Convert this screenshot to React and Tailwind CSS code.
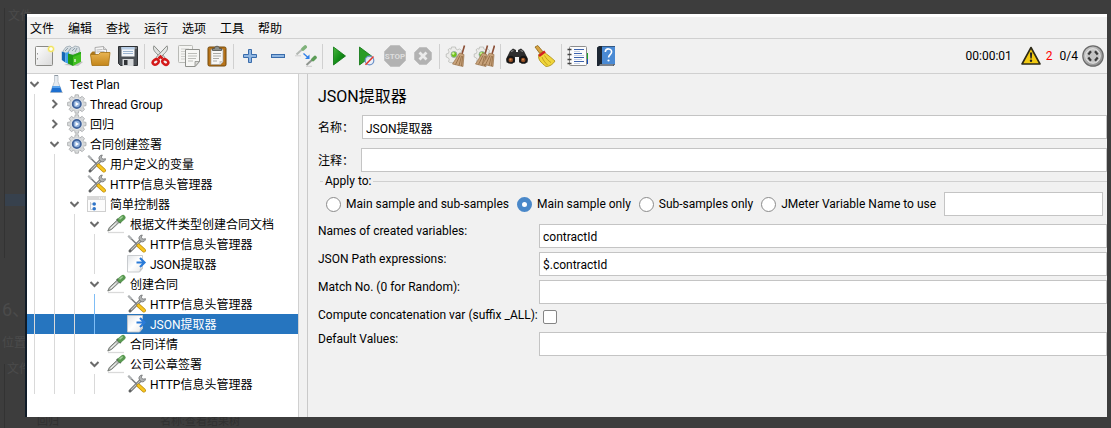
import React, { useState } from "react";

const MENUS = ["文件", "编辑", "查找", "运行", "选项", "工具", "帮助"];

/* ---------- toolbar icons (22 x 22) ---------- */

function Svg({ size = 22, children }) {
  return (
    <svg width={size} height={size} viewBox={`0 0 ${size} ${size}`} fill="none" aria-hidden="true" className="shrink-0">
      {children}
    </svg>
  );
}

const NewIcon = () => (
  <Svg>
    <defs>
      <linearGradient id="newPaper" x1="0" y1="0" x2="1" y2="1">
        <stop offset="0" stopColor="#fff" />
        <stop offset="1" stopColor="#d9d9d9" />
      </linearGradient>
    </defs>
    <rect x="2.5" y="1.5" width="17" height="19" rx="1" fill="url(#newPaper)" stroke="#8a8a86" />
    <path d="M4.5 8v1.5M4.5 13v1.5" stroke="#999" />
    <circle cx="18" cy="4" r="3.6" fill="#f7ee8e" opacity=".8" />
    <circle cx="18" cy="4" r="2.4" fill="#fffef0" stroke="#f0e040" />
  </Svg>
);

const TemplatesIcon = () => (
  <Svg>
    <path d="M3 20l14 1 5-4-6-2z" fill="#000" opacity=".2" />
    <path d="M2 6l3-4 4-1 2 2 3-2 4 1 1 4-3 3-12 1z" fill="#d5dde2" stroke="#9aa7b0" strokeWidth=".8" />
    <path d="M4 6l3-3M7 7l3-4M11 6l3-3M14 7l2-4" stroke="#8597a3" strokeWidth=".9" />
    <path d="M.8 6.500l3.500 1.200v9.800L.8 15z" fill="#1467b4" />
    <path d="M4.300 7.700L8 7v12l-3.700-1.500z" fill="#3ea0ea" />
    <path d="M7 8.500l5 1.500v11l-5-2.600z" fill="#1f9a16" />
    <path d="M12 10l8-3.200v10L12 21z" fill="#41c020" />
    <path d="M12 10l8-3.200v2L12 12z" fill="#2aa51a" />
    <path d="M14 14v3" stroke="#e8f8e0" strokeWidth="1.300" />
  </Svg>
);

const OpenIcon = () => (
  <Svg>
    <defs>
      <linearGradient id="folder" x1="0" y1="0" x2="0" y2="1">
        <stop offset="0" stopColor="#e8b452" />
        <stop offset="1" stopColor="#c4861a" />
      </linearGradient>
    </defs>
    <path d="M1.500 8.500l2-2h14l1.500 2v11H3z" fill="#a9761b" />
    <path d="M6 2.500l8.500-1 3 3v6h-11z" fill="#f6f6f6" stroke="#a5a5a5" strokeWidth=".9" />
    <path d="M7.500 5l6-.5M7.500 7l8-.5" stroke="#b5b5b5" strokeWidth=".9" />
    <path d="M14.500 1.500v3h3" fill="#ddd" stroke="#a5a5a5" strokeWidth=".8" />
    <path d="M1.500 9.500h8l2-2h9.500l-1.500 13H3z" fill="url(#folder)" stroke="#a5700f" strokeWidth=".8" />
  </Svg>
);

const SaveIcon = () => (
  <Svg>
    <path d="M1.500 1.500h19v19H3.500l-2-2z" fill="#4c5156" stroke="#2d3033" />
    <rect x="4.500" y="2" width="13" height="9.500" fill="#f4f7fa" />
    <rect x="4.500" y="2" width="13" height="2.500" fill="#b9cfe8" />
    <path d="M6 6.500h10M6 8.500h10" stroke="#9bb4cf" />
    <rect x="5.500" y="14" width="11" height="7" fill="#d5d8da" />
    <rect x="7" y="15" width="3.500" height="5" fill="#303336" />
    <path d="M18.500 2.500h1v1h-1z" fill="#fff" />
  </Svg>
);

const CutIcon = () => (
  <Svg>
    <path d="M4 .8C2.600 3.500 4 6 6.500 8.500l6.500 6 1.800-2.200z" fill="#dfe1df" stroke="#7d807c" strokeWidth=".9" />
    <path d="M17 .8c1.400 2.700 0 5.200-2.500 7.700L8 14.500l-1.800-2.200z" fill="#e6e8e6" stroke="#7d807c" strokeWidth=".9" />
    <path d="M8.500 13.500l2-2 2 2" stroke="#d41a1a" strokeWidth="2.500" />
    <ellipse cx="5.700" cy="17" rx="3.200" ry="2.400" transform="rotate(-35 5.700 17)" stroke="#d41a1a" strokeWidth="2.500" />
    <ellipse cx="15.300" cy="17" rx="3.200" ry="2.400" transform="rotate(35 15.300 17)" stroke="#d41a1a" strokeWidth="2.500" />
  </Svg>
);

const CopyIcon = () => (
  <Svg>
    <rect x=".5" y=".5" width="14" height="17" rx=".8" fill="#f4f4f2" stroke="#b9bab6" />
    <path d="M3 4h8M3 6.500h8M3 9h5M3 11.500h4M3 14h4" stroke="#cfcfcc" />
    <path d="M7.500 4.500h14v12l-4.500 5H7.500z" fill="#f7f7f5" stroke="#8f908c" />
    <path d="M10 8.500h9M10 11h9M10 13.500h8M10 16h5" stroke="#bcbdb9" />
    <path d="M21.500 16.500H17v5z" fill="#d8d8d5" stroke="#8f908c" strokeWidth=".8" />
  </Svg>
);

const PasteIcon = () => (
  <Svg>
    <rect x="2" y="2" width="18" height="19" rx="1.500" fill="#b8741a" stroke="#73480b" />
    <path d="M5 4.500h12v12.500l-2.500 2.500H5z" fill="#f7f7f6" stroke="#a1a19d" strokeWidth=".7" />
    <path d="M7 8.500h8M7 11h8M7 13.500h6M7 16h4" stroke="#a9aaa6" />
    <path d="M17 16h-3.500v3.500z" fill="#c9c9c6" />
    <path d="M6.500 5.500V3.500h2c0-3 5-3 5 0h2v2z" fill="#8b8e89" stroke="#4d4f4c" strokeWidth=".8" />
  </Svg>
);

const PlusIcon = () => (
  <Svg>
    <path d="M9.500 4.500h3v5h5v3h-5v5h-3v-5h-5v-3h5z" fill="#8fb6e2" stroke="#3a6cab" />
  </Svg>
);

const MinusIcon = () => (
  <Svg>
    <rect x="4.500" y="9.500" width="13" height="3" fill="#8fb6e2" stroke="#3a6cab" />
  </Svg>
);

const ToggleIcon = () => (
  <Svg>
    <path d="M1.500 9.500l6-5.500" stroke="#b3b8b3" strokeWidth="2" />
    <path d="M8 4l2.200-2" stroke="#7fb27a" strokeWidth="3.600" strokeLinecap="round" />
    <path d="M8.500 8.500l4.500 4" stroke="#2f7fe8" strokeWidth="1.400" />
    <path d="M14.500 9.500v4.500H10z" fill="#2f7fe8" />
    <path d="M11.500 20l6-5.500" stroke="#8f958f" strokeWidth="2" />
    <path d="M18 14.500l2-2" stroke="#5c9d57" strokeWidth="3.600" strokeLinecap="round" />
    <path d="M0 10.800h6M11 21.300h6" stroke="#cfcfcf" />
  </Svg>
);

const PlayIcon = () => (
  <Svg>
    <defs>
      <linearGradient id="play" x1="0" y1="0" x2="1" y2="1">
        <stop offset="0" stopColor="#4ab83e" />
        <stop offset=".5" stopColor="#16901a" />
        <stop offset="1" stopColor="#06660a" />
      </linearGradient>
    </defs>
    <path d="M5.500 2l12 9-12 9z" fill="url(#play)" stroke="#0b7410" strokeWidth=".8" />
  </Svg>
);

const PlayNoPauseIcon = () => (
  <Svg>
    <path d="M3.500 2l12 9-12 9z" fill="#2a9c26" stroke="#0b7410" strokeWidth=".8" />
    <circle cx="13.500" cy="15.500" r="4.300" fill="#e9eef8" fillOpacity=".9" stroke="#6f93c8" strokeWidth="1.200" />
    <path d="M9.500 19.800l8-8.300" stroke="#e03a2c" strokeWidth="1.500" />
  </Svg>
);

const StopIcon = () => (
  <Svg>
    <path d="M6.500.5h9l6 6v9l-6 6h-9l-6-6v-9z" fill="#b2b2b2" stroke="#c2c2c2" />
    <text x="11" y="14" textAnchor="middle" fontSize="8" fontWeight="700" fill="#dedede" fontFamily="Roboto, sans-serif">
      STOP
    </text>
  </Svg>
);

const ShutdownIcon = () => (
  <Svg>
    <path d="M7.500 2.500h7l5 5v7l-5 5h-7l-5-5v-7z" fill="#b2b2b2" stroke="#c2c2c2" />
    <path d="M7.500 7.500l7 7M14.500 7.500l-7 7" stroke="#ebebeb" strokeWidth="2.800" />
  </Svg>
);

function Broom({ x = 0 }) {
  return (
    <g transform={`translate(${x} 0)`}>
      <path d="M18.500.5L16 9" stroke="#8b4e35" strokeWidth="1.600" />
      <path d="M13.500 8l4.500 1.500-1 12-10.500-2.500z" fill="#c8a27a" stroke="#98734c" strokeWidth=".7" />
      <path d="M14 10.500l-4.500 9M15.500 11L13 20.500M16.700 11l-1.200 10" stroke="#8a633a" strokeWidth=".7" />
    </g>
  );
}

const GearSmall = () => (
  <g>
    <path
      d="M6.500 2h4l.4 2 1.800.8 2-1 2 2-1 2 .5 2 1.800.7v3l-2 .6-.6 1.700.8 1.800H5l-1.500-1 .7-2L3.500 13 1.200 12V9l2.200-.6.6-1.600-1-2 1.600-1.300 1.500.7z"
      fill="#ececea"
      stroke="#b3b5b0"
      strokeWidth=".7"
    />
    <circle cx="9" cy="9.500" r="3" fill="#6fc41a" stroke="#9aa" strokeWidth=".9" />
    <circle cx="8.300" cy="8.500" r="1.200" fill="#d4f7a0" />
  </g>
);

const ClearIcon = () => (
  <Svg>
    <GearSmall />
    <Broom x={1} />
  </Svg>
);

const ClearAllIcon = () => (
  <Svg>
    <GearSmall />
    <Broom x={-4} />
    <Broom x={3} />
  </Svg>
);

const SearchIcon = () => (
  <Svg>
    <path d="M4 6l3-2.500 3 1.500v2h2V5l3-1.500L18 6l3.500 7v4.500H13V12H9v5.500H.5V13z" fill="#2e2e2e" />
    <path d="M5 6.500l2.500-1M14.500 5.500l2.500 1" stroke="#8c8c8c" strokeWidth="1.200" />
    <ellipse cx="4.600" cy="14.800" rx="4.300" ry="4" fill="#151515" />
    <ellipse cx="17.400" cy="14.800" rx="4.300" ry="4" fill="#151515" />
    <circle cx="4.800" cy="15" r="2.300" fill="#8e4a23" />
    <circle cx="17.200" cy="15" r="2.300" fill="#8e4a23" />
    <circle cx="4.500" cy="14.500" r="1" fill="#d69054" />
    <circle cx="17" cy="14.500" r="1" fill="#d69054" />
  </Svg>
);

const BroomIcon = () => (
  <Svg>
    <path d="M1 2L3.800.5l5 6-3 2z" fill="#d9a441" stroke="#8c6414" strokeWidth=".8" />
    <path d="M9.500 6.500l3 2.500c3 2 5.500 4.500 8.500 7-2 3.500-5.500 5.500-9 5.500-2-1.300-5-4-6.500-6.300C4 12 4.500 10 5 9z" fill="#f0d53a" stroke="#a98b12" strokeWidth=".8" />
    <path d="M5 11l6-4.500" stroke="#d32121" strokeWidth="2.400" />
    <path d="M8 12c1 3 3 5.500 5.500 8M10.500 10.500c1.500 3 4 5.500 6.500 7" stroke="#bd9a17" strokeWidth=".9" />
  </Svg>
);

const FunctionIcon = () => (
  <Svg>
    <path d="M18 8h3v6h-3z" fill="#19a326" />
    <path d="M18 14h3v5h-3z" fill="#164fb8" />
    <rect x="2.500" y="1.500" width="17" height="19" rx="1" fill="#fcfcfc" stroke="#8d8d8d" />
    <path d="M7 4.500h10M7 8.500h8M7 12.500h10M7 16.500h10" stroke="#3c62ad" strokeWidth="1.200" />
    <path d="M7 6.500h6M7 10.500h10M7 14.500h8M7 18.500h6" stroke="#b8c4dc" strokeWidth=".8" />
    <path d="M.5 4.500h4M.5 9.500h4M.5 14.500h4M.5 18.500h4" stroke="#444" strokeWidth="1.600" />
  </Svg>
);

const HelpIcon = () => (
  <Svg>
    <path d="M2 2.500L4 1h16v18l-1.500 2H2z" fill="#1d2733" />
    <path d="M7 1.500h13v17.500H7z" fill="#4a8ad4" />
    <path d="M5 19.500h14l-1 1H4z" fill="#d9dee4" />
    <path d="M10.300 7c.2-4.200 6.500-4 6.300 0-.1 2.500-3 2.800-3 5.500" stroke="#fff" strokeWidth="1.600" />
    <circle cx="13.500" cy="15.500" r="1.100" fill="#fff" />
  </Svg>
);

const WarningIcon = () => (
  <Svg>
    <path d="M11 2.500l9 16.500H2z" fill="#f2ca12" stroke="#2d2a18" strokeWidth="1.600" strokeLinejoin="round" />
    <path d="M9.900 7.500h2.300l-.5 6h-1.300z" fill="#222" />
    <circle cx="11" cy="15.700" r="1.200" fill="#222" />
  </Svg>
);

const StatusIcon = () => (
  <Svg>
    <defs>
      <linearGradient id="ring" x1="0" y1="0" x2="1" y2="1">
        <stop offset="0" stopColor="#d2d2d2" />
        <stop offset="1" stopColor="#858585" />
      </linearGradient>
    </defs>
    <circle cx="11" cy="11" r="10.200" fill="url(#ring)" stroke="#6a6a6a" strokeWidth="1.200" />
    <circle cx="11" cy="11" r="7.300" fill="#c4c4c4" stroke="#efefef" strokeWidth=".8" />
    <path d="M6.300 9.500l2.700-3.200M13 6.300l2.700 3.200M6.300 12.500l2.700 3.200M15.700 12.500L13 15.700" stroke="#3a3a3a" strokeWidth="2.200" />
  </Svg>
);

const TOOLBAR = [
  [["New", NewIcon], ["Templates", TemplatesIcon], ["Open", OpenIcon], ["Save", SaveIcon]],
  [["Cut", CutIcon], ["Copy", CopyIcon], ["Paste", PasteIcon]],
  [["Expand all", PlusIcon], ["Collapse all", MinusIcon], ["Toggle", ToggleIcon]],
  [["Start", PlayIcon], ["Start no pauses", PlayNoPauseIcon], ["Stop", StopIcon, true], ["Shutdown", ShutdownIcon, true]],
  [["Clear", ClearIcon], ["Clear all", ClearAllIcon]],
  [["Search", SearchIcon], ["Reset search", BroomIcon]],
  [["Function helper", FunctionIcon], ["Help", HelpIcon]],
];

/* ---------- tree icons (20 x 20) ---------- */

const FlaskIcon = () => (
  <Svg size={20}>
    <path d="M3 18.500h13" stroke="#d0d0d0" />
    <path d="M7.500 1.500h3.500v6l4 10.500H3.500l4-10.500z" fill="#e6ebf0" stroke="#b6bfc8" strokeWidth=".8" />
    <path d="M5.800 12h7l2.200 6.200H3.700z" fill="#1d6fd0" />
    <path d="M5.800 12h7l.7 2H5.100z" fill="#5ba4ec" />
    <path d="M7.500 1.500H11" stroke="#8e98a2" />
  </Svg>
);

const GEAR_ANGLES = [0, 45, 90, 135, 180, 225, 270, 315];

const GearIcon = () => (
  <Svg size={20}>
    {GEAR_ANGLES.map((a) => (
      <path key={a} d="M8.200.8h3.200l.8 4H7.400z" transform={`rotate(${a} 9.800 10)`} fill="#d9dbdc" stroke="#a6a8aa" strokeWidth=".8" />
    ))}
    <circle cx="9.800" cy="10" r="7" fill="#d3d5d6" />
    <circle cx="9.800" cy="10" r="5.700" fill="#eceded" />
    <circle cx="9.800" cy="10" r="4.100" fill="#8fb0dc" stroke="#3f629b" strokeWidth="1.800" />
    <path d="M8.500 7.800l3.500 2.200-3.500 2.200z" fill="#fff" />
  </Svg>
);

const ToolsIcon = () => (
  <Svg size={20}>
    <path d="M3 17l11-11" stroke="#5f6162" strokeWidth="3" strokeLinecap="round" />
    <path d="M4 16l9.500-9.500" stroke="#c3c5c5" strokeWidth="1.200" />
    <path d="M12 5c-.5-2 1-4 3.300-4l-1 2.200 1.500 2 2.700-.5c0 2.300-2.200 3.800-4.500 3z" fill="#b0b2b3" stroke="#707273" strokeWidth=".8" />
    <path d="M1.500 2l8.500 8.500" stroke="#7b7e80" strokeWidth="1.600" />
    <path d="M1.200 1.700l3.300 3.300" stroke="#b0b3b5" strokeWidth="2.200" />
    <path d="M11.500 11.500l5.500 5" stroke="#b98a0c" strokeWidth="4" strokeLinecap="round" />
    <path d="M11.500 11.500l5.500 5" stroke="#f7c520" strokeWidth="2.600" strokeLinecap="round" />
  </Svg>
);

const ControllerIcon = () => (
  <Svg size={20}>
    <rect x=".5" y="2.500" width="18" height="15" fill="#fcfcfc" stroke="#cfcfcf" />
    <rect x="0" y="2" width="19" height="4" fill="#d8d8d8" />
    <path d="M12 4h1M14 4h1M16 4h1" stroke="#fff" />
    <path d="M3.500 8v7.500h3M3.500 10h3" stroke="#b5bdc6" strokeWidth=".8" />
    <circle cx="7.200" cy="10" r="1.800" fill="#2f74c8" />
    <circle cx="7.200" cy="14.700" r="1.800" fill="#2f74c8" />
  </Svg>
);

const DropperIcon = () => (
  <Svg size={20}>
    <path d="M1 18.500h16" stroke="#dadada" strokeWidth="1.300" />
    <path d="M.8 17l1.500-3.500 8-7.500L12.500 8l-8 7.500z" fill="#b4b8b4" stroke="#6f756f" strokeWidth=".9" />
    <path d="M3.500 14.500l6-5.500" stroke="#fff" strokeWidth="1" />
    <path d="M9.800 5l4 4" stroke="#4b574b" strokeWidth="1.800" />
    <path d="M13 6l3-2.500" stroke="#5a9a52" strokeWidth="5" strokeLinecap="round" />
    <path d="M13 4.800l2.200-1.800" stroke="#a3d09c" strokeWidth="1.500" strokeLinecap="round" />
  </Svg>
);

const ExtractorIcon = () => (
  <Svg size={20}>
    <defs>
      <linearGradient id="extract" x1="0" y1="0" x2="1" y2="1">
        <stop offset="0" stopColor="#dfe3e7" />
        <stop offset=".5" stopColor="#fff" />
        <stop offset="1" stopColor="#e8e8e8" />
      </linearGradient>
    </defs>
    <path d="M.5 1.500h15v13l-3 3.500H.5z" fill="url(#extract)" stroke="#c3c6c9" strokeWidth=".9" />
    <path d="M12.500 18l.5-3.500 3-.5z" fill="#c4c6c8" />
    <path d="M9.500 8.500H17M13 4l4.500 4.500L13 13" stroke="#2a7bd8" strokeWidth="2.200" />
  </Svg>
);

const TREE = [
  { level: 0, icon: FlaskIcon, label: "Test Plan", state: "open" },
  { level: 1, icon: GearIcon, label: "Thread Group", state: "closed" },
  { level: 1, icon: GearIcon, label: "回归", state: "closed" },
  { level: 1, icon: GearIcon, label: "合同创建签署", state: "open" },
  { level: 2, icon: ToolsIcon, label: "用户定义的变量" },
  { level: 2, icon: ToolsIcon, label: "HTTP信息头管理器" },
  { level: 2, icon: ControllerIcon, label: "简单控制器", state: "open" },
  { level: 3, icon: DropperIcon, label: "根据文件类型创建合同文档", state: "open" },
  { level: 4, icon: ToolsIcon, label: "HTTP信息头管理器" },
  { level: 4, icon: ExtractorIcon, label: "JSON提取器" },
  { level: 3, icon: DropperIcon, label: "创建合同", state: "open" },
  { level: 4, icon: ToolsIcon, label: "HTTP信息头管理器", active: true },
  { level: 4, icon: ExtractorIcon, label: "JSON提取器", active: true, selected: true },
  { level: 3, icon: DropperIcon, label: "合同详情" },
  { level: 3, icon: DropperIcon, label: "公司公章签署", state: "open" },
  { level: 4, icon: ToolsIcon, label: "HTTP信息头管理器" },
];

function Expander({ state, label }) {
  if (!state) return <span className="w-5 shrink-0" />;
  return (
    <button type="button" aria-label={`${state === "open" ? "Collapse" : "Expand"} ${label}`} className="flex h-5 w-5 shrink-0 items-center pl-[3px]">
      <svg width="10" height="10" viewBox="0 0 10 10" fill="none" stroke="#6b6b6b" strokeWidth="2" aria-hidden="true">
        <path d={state === "open" ? "M.5 3l4 4 4-4" : "M2.500 1l4 4-4 4"} />
      </svg>
    </button>
  );
}

function TreeRow({ node }) {
  const Icon = node.icon;
  return (
    <li
      role="treeitem"
      aria-level={node.level + 1}
      aria-selected={!!node.selected}
      className={`flex h-5 items-center ${node.selected ? "bg-[#2675bf] text-white" : ""}`}
    >
      {Array.from({ length: node.level }, (_, i) => (
        <span key={i} className="flex h-5 w-5 shrink-0 pl-[7px]">
          <span className={`w-px ${node.active && i === 3 ? "bg-[#7fbdf5]" : "bg-[#d9d9d9]"}`} />
        </span>
      ))}
      <Expander state={node.state} label={node.label} />
      <Icon />
      <span className="ml-[3px] pt-[2px] leading-[18px] whitespace-nowrap">{node.label}</span>
    </li>
  );
}

const FIELD = "h-6 w-full min-w-0 border border-[#c4c4c4] bg-white px-[3px] pt-px text-xs outline-none";

function RadioOption({ id, label, value, onChange }) {
  return (
    <label className="flex items-center gap-[5px] whitespace-nowrap">
      <input
        type="radio"
        name="scope"
        checked={value === id}
        onChange={() => onChange(id)}
        className="h-[15px] w-[15px] shrink-0 appearance-none rounded-full border border-[#8b8b8b] bg-white checked:border-[5px] checked:border-[#4a88c9]"
      />
      {label}
    </label>
  );
}

function ParamRow({ id, label, value }) {
  return (
    <div className="grid grid-cols-[221px_1fr] items-start">
      <label htmlFor={id} className="whitespace-nowrap leading-[14px]">
        {label}
      </label>
      <input id={id} type="text" defaultValue={value} className={FIELD} />
    </div>
  );
}

function Backdrop() {
  return (
    <div aria-hidden="true" className="absolute inset-0 overflow-hidden text-[#4b4b4b] select-none">
      <span className="absolute top-2 left-1 h-[250px] w-px bg-[#333]" />
      <span className="absolute top-2 left-2">文件</span>
      <span className="absolute top-[194px] left-[5px] h-3 w-5 bg-[#37414d]" />
      <span className="absolute top-[296px] left-[2px] text-lg">6、</span>
      <span className="absolute top-[335px] left-[2px]">位置</span>
      <span className="absolute top-[361px] left-[7px]">文件</span>
      <span className="absolute top-[364px] left-1 h-16 w-px bg-[#333]" />
      <span className="absolute top-[416px] left-[37px] text-[11px] leading-3 text-[#303030]">回归</span>
      <span className="absolute top-[416px] left-[160px] text-[11px] leading-3 text-[#303030]">名称:</span>
      <span className="absolute top-[416px] left-[185px] text-[11px] leading-3 text-[#303030]">查看结果树</span>
    </div>
  );
}

export default function App() {
  const [scope, setScope] = useState("main");

  return (
    <div className="relative flex min-h-screen bg-[#3d3d3d] pt-[14px] pr-1 pb-[11px] pl-[25px] font-['Roboto','Noto_Sans_CJK_SC',sans-serif] text-xs text-black">
      <Backdrop />
      <div className="relative flex min-w-0 flex-1 flex-col border-l-2 border-[#101c28] bg-[#f1f1f1]">
        <nav className="flex h-[25px] items-center gap-[14px] border-t-3 border-b border-t-white border-b-[#d0d0d0] pt-[2px] pl-[3px]">
          {MENUS.map((m) => (
            <button key={m} type="button" className="leading-5">
              {m}
            </button>
          ))}
        </nav>

        <div className="flex h-[35px] items-center border-b border-[#d0d0d0] pr-[3px] pl-[3px]">
          {TOOLBAR.map((group, g) => (
            <div key={g} className="flex items-center">
              {g > 0 && <span className="mx-[2px] h-[25px] w-px bg-[#d0d0d0]" />}
              {group.map(([name, Icon, disabled]) => (
                <button key={name} type="button" aria-label={name} disabled={disabled} className="flex h-7 w-7 items-center justify-center">
                  <Icon />
                </button>
              ))}
            </div>
          ))}
          <div className="ml-auto flex items-center gap-1">
            <span className="mr-1">00:00:01</span>
            <WarningIcon />
            <span className="mr-[3px] text-[#ff0000]">2</span>
            <span>0/4</span>
            <StatusIcon />
          </div>
        </div>

        <div className="flex flex-1">
          <ul role="tree" className="w-[272px] shrink-0 border-r border-[#d0d0d0] bg-white">
            {TREE.map((node, i) => (
              <TreeRow key={i} node={node} />
            ))}
          </ul>
          <main className="ml-2 flex min-w-0 flex-1 flex-col border-l border-[#c9c9c9] pt-[13px] pl-[10px]">
            <h1 className="text-base leading-5">JSON提取器</h1>
            <div className="mt-2 flex items-center">
              <label htmlFor="name" className="w-11 shrink-0 pt-[2px]">
                名称：
              </label>
              <input id="name" type="text" defaultValue="JSON提取器" className={FIELD} />
            </div>
            <div className="mt-[9px] flex items-center">
              <label htmlFor="comment" className="w-[43px] shrink-0 pt-[2px]">
                注释：
              </label>
              <input id="comment" type="text" className={FIELD} />
            </div>

            <fieldset className="ml-[2px] border-t border-[#d0d0d0] pr-1 pb-2 pl-[6px]">
              <legend className="-ml-[3px] px-[2px] leading-[18px]">Apply to:</legend>
              <div className="mt-[2px] flex items-center gap-2">
                <RadioOption id="all" label="Main sample and sub-samples" value={scope} onChange={setScope} />
                <RadioOption id="main" label="Main sample only" value={scope} onChange={setScope} />
                <RadioOption id="sub" label="Sub-samples only" value={scope} onChange={setScope} />
                <RadioOption id="variable" label="JMeter Variable Name to use" value={scope} onChange={setScope} />
                <input type="text" aria-label="JMeter Variable Name" className={FIELD} />
              </div>
            </fieldset>

            <div className="flex flex-col gap-1">
              <ParamRow id="names" label="Names of created variables:" value="contractId" />
              <ParamRow id="paths" label="JSON Path expressions:" value="$.contractId" />
              <ParamRow id="match" label="Match No. (0 for Random):" />
              <div className="grid h-5 grid-cols-[225px_1fr] items-start">
                <label htmlFor="concat" className="whitespace-nowrap leading-[14px]">
                  Compute concatenation var (suffix _ALL):
                </label>
                <input id="concat" type="checkbox" className="mt-[2px] h-[14px] w-[14px] appearance-none rounded-[2px] border border-[#858585] bg-white" />
              </div>
              <ParamRow id="defaults" label="Default Values:" />
            </div>
          </main>
        </div>
      </div>
    </div>
  );
}
